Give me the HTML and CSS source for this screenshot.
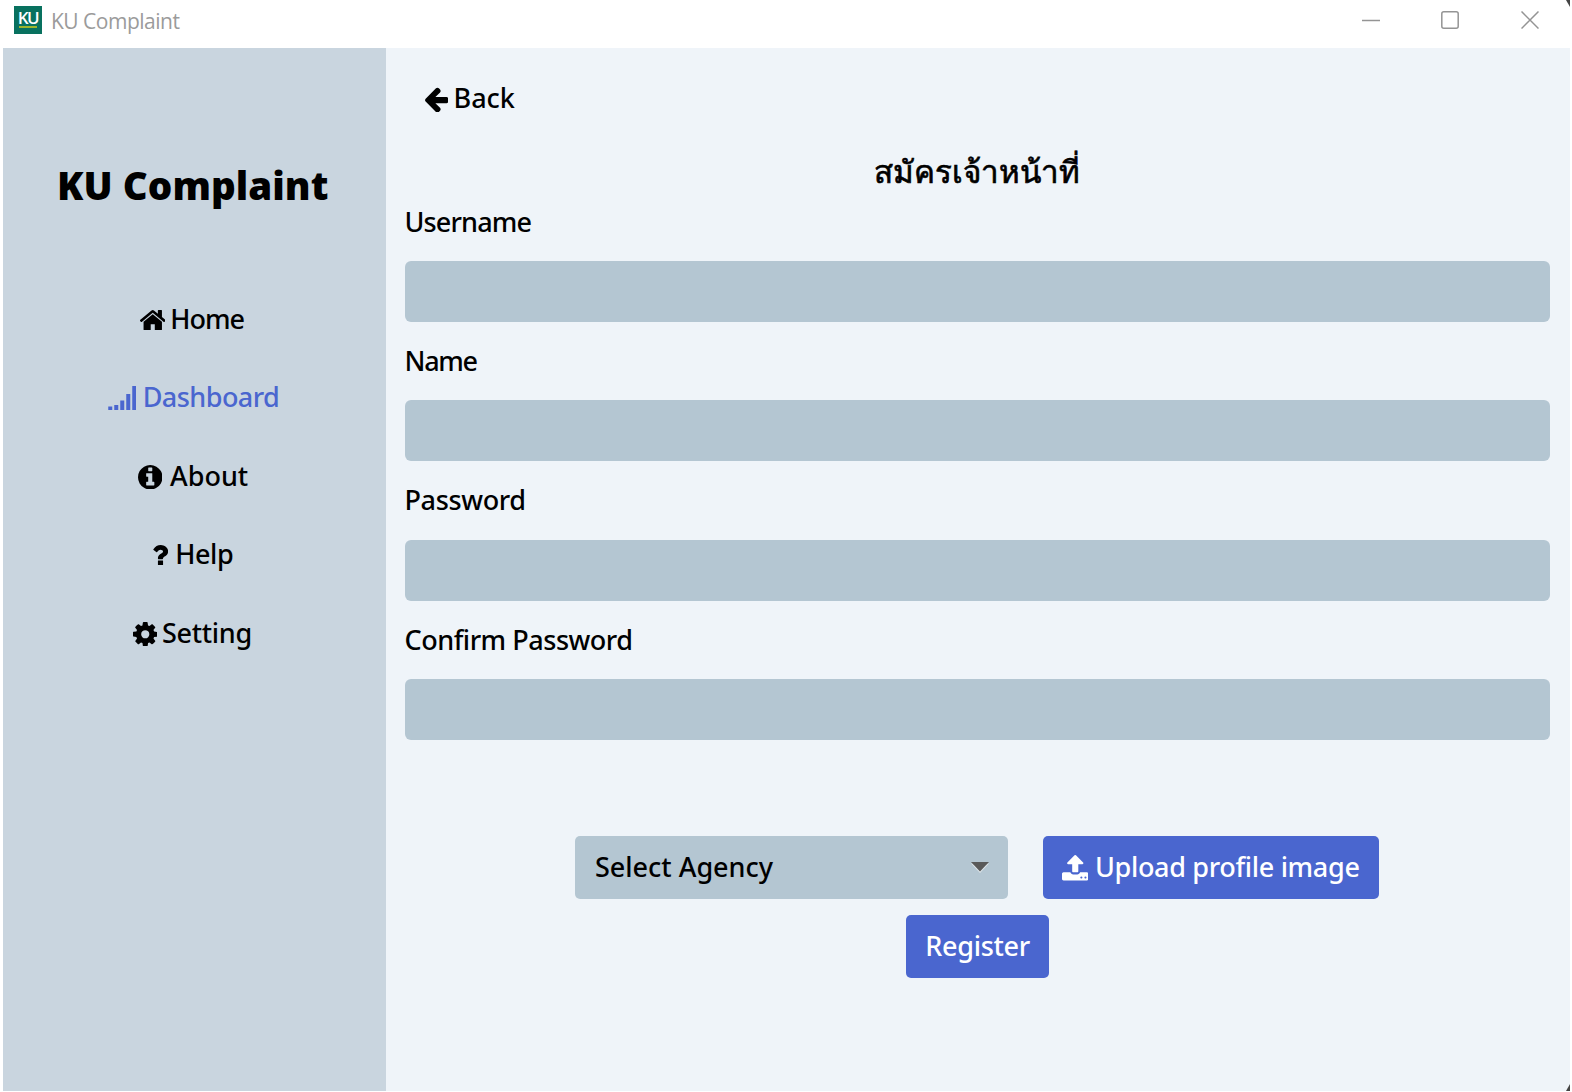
FILE: index.html
```html
<!DOCTYPE html>
<html lang="th">
<head>
<meta charset="utf-8">
<title>KU Complaint</title>
<link rel="stylesheet" href="styles.css">
</head>
<body>
<div class="window">
  <header class="titlebar">
    <div class="brand">
      <span class="logo"><span class="logo-text">KU</span></span>
      <span class="brand-name">KU Complaint</span>
    </div>
    <div class="controls">
      <svg class="control" viewBox="0 0 18 18"><path d="M0 9.5H18"/></svg>
      <svg class="control" viewBox="0 0 18 18"><rect x=".8" y=".8" width="16.4" height="16.4" rx="2"/></svg>
      <svg class="control" viewBox="0 0 18 18"><path d="M.5 .5L17.5 17.5M17.5 .5L.5 17.5"/></svg>
    </div>
  </header>
  <div class="body">
    <aside class="sidebar">
      <h1 class="app-name">KU Complaint</h1>
      <nav class="nav">
        <a class="nav-item home"><svg class="icon" viewBox="97 253 1598 1283"><path d="M1472 992v480q0 26-19 45t-45 19h-384v-384h-256v384h-384q-26 0-45-19t-19-45v-480q0-1 .5-3t.5-3l575-474 575 474q1 2 1 6zm223-69l-62 74q-8 9-21 11h-3q-13 0-21-7l-692-577-692 577q-12 8-24 7-13-2-21-11l-62-74q-8-10-7-23.5t11-21.5l719-599q32-26 76-26t76 26l244 204v-195q0-14 9-23t23-9h192q14 0 23 9t9 23v408l219 182q10 8 11 21.5t-7 23.5z"/></svg><span>Home</span></a>
        <a class="nav-item dashboard active"><svg class="icon" viewBox="0 0 28 24"><path d="M0 20.5h4V24H0zM6 19h4v5H6zM12 14.5h4V24h-4zM18 8h4v16h-4zM24 0h4v24h-4z"/></svg><span>Dashboard</span></a>
        <a class="nav-item about"><svg class="icon" viewBox="128 128 1536 1536"><path d="M1152 1376v-160q0-14-9-23t-23-9h-96v-512q0-14-9-23t-23-9h-320q-14 0-23 9t-9 23v160q0 14 9 23t23 9h96v320h-96q-14 0-23 9t-9 23v160q0 14 9 23t23 9h448q14 0 23-9t9-23zm-128-896v-160q0-14-9-23t-23-9h-192q-14 0-23 9t-9 23v160q0 14 9 23t23 9h192q14 0 23-9t9-23zm640 416q0 209-103 385.5t-279.5 279.5-385.5 103-385.5-103-279.5-279.5-103-385.5 103-385.5 279.5-279.5 385.5-103 385.5 103 279.5 279.5 103 385.5z"/></svg><span>About</span></a>
        <a class="nav-item help"><svg class="icon" viewBox="464 256 940 1280"><path d="M1088 1256v240q0 16-12 28t-28 12h-240q-16 0-28-12t-12-28v-240q0-16 12-28t28-12h240q16 0 28 12t12 28zm316-600q0 54-15.5 101t-35 76.5-55 59.5-57.5 43.5-61 35.5q-41 23-68.5 65t-27.5 67q0 17-12 32.5t-28 15.5h-240q-15 0-25.5-18.5t-10.5-37.5v-45q0-83 65-156.5t143-108.5q59-27 84-56t25-76q0-42-46.5-74t-107.5-32q-65 0-108 29-35 25-107 115-13 16-31 16-12 0-25-8l-164-125q-13-10-15.5-25t5.5-28q160-266 464-266 80 0 161 31t146 83 106 127.5 41 158.5z"/></svg><span>Help</span></a>
        <a class="nav-item setting"><svg class="icon" viewBox="128 128 1536 1536"><path d="M1152 896q0-106-75-181t-181-75-181 75-75 181 75 181 181 75 181-75 75-181zm512-109v222q0 12-8 23t-20 13l-185 28q-19 54-39 91 35 50 107 138 10 12 10 25t-9 23q-27 37-99 108t-94 71q-12 0-26-9l-138-108q-44 23-91 38-16 136-29 186-7 28-36 28h-222q-14 0-24.5-8.5t-11.5-21.5l-28-184q-49-16-90-37l-141 107q-10 9-25 9-14 0-25-11-126-114-165-168-7-10-7-23 0-12 8-23 15-21 51-66.5t54-70.5q-27-50-41-99l-183-27q-13-2-21-12.5t-8-23.5v-222q0-12 8-23t19-13l186-28q14-46 39-92-40-57-107-138-10-12-10-24 0-10 9-23 26-36 98.5-107.5t94.5-71.5q13 0 26 10l138 107q44-23 91-38 16-136 29-186 7-28 36-28h222q14 0 24.5 8.5t11.5 21.5l28 184q49 16 90 37l142-107q9-9 24-9 13 0 25 10 129 119 165 170 7 8 7 22 0 12-8 23-15 21-51 66.5t-54 70.5q26 50 41 98l183 28q13 2 21 12.5t8 23.5z"/></svg><span>Setting</span></a>
      </nav>
    </aside>
    <main class="content">
      <a class="back"><svg class="icon" viewBox="192 133 1472 1606"><path d="M1664 896v128q0 53-32.5 90.5t-84.5 37.5h-704l293 294q38 36 38 90t-38 90l-75 76q-37 37-90 37-52 0-91-37l-651-652q-37-37-37-90 0-52 37-91l651-650q38-38 91-38 52 0 90 38l75 74q38 38 38 91t-38 91l-293 293h704q52 0 84.5 37.5t32.5 90.5z"/></svg><span>Back</span></a>
      <h2 class="form-title">สมัครเจ้าหน้าที่</h2>
      <form class="form">
        <label class="field username"><span>Username</span><input class="input" type="text"></label>
        <label class="field name"><span>Name</span><input class="input" type="text"></label>
        <label class="field password"><span>Password</span><input class="input" type="password"></label>
        <label class="field confirm"><span>Confirm Password</span><input class="input" type="password"></label>
        <div class="actions">
          <div class="select"><span>Select Agency</span><svg class="caret" viewBox="0 0 18 11"><path class="caret-edge" d="M0 1.4H18L9 11z"/><path d="M0 0H18L9 9.6z"/></svg></div>
          <button class="button upload" type="button"><svg class="icon" viewBox="64 64 1664 1600"><path d="M1344 1472q0-26-19-45t-45-19-45 19-19 45 19 45 45 19 45-19 19-45zm256 0q0-26-19-45t-45-19-45 19-19 45 19 45 45 19 45-19 19-45zm128-224v320q0 40-28 68t-68 28h-1472q-40 0-68-28t-28-68v-320q0-40 28-68t68-28h427q21 56 70.5 92t110.5 36h256q61 0 110.5-36t70.5-92h427q40 0 68 28t28 68zm-325-648q-17 40-59 40h-256v448q0 26-19 45t-45 19h-256q-26 0-45-19t-19-45v-448h-256q-42 0-59-40-17-39 14-69l448-448q18-19 45-19t45 19l448 448q31 30 14 69z"/></svg><span>Upload profile image</span></button>
        </div>
        <button class="button register" type="button"><span>Register</span></button>
      </form>
    </main>
  </div>
</div>
</body>
</html>
```
FILE: styles.css
```css
* { box-sizing: border-box; }
body { margin: 0; background: #fff; color: #000; font: 500 27px/40px "Noto Sans", "Open Sans", sans-serif; }
.window { position: relative; height: 1092px; display: flex; flex-direction: column; overflow: hidden; padding: 0 2px 1px 3px; }
/* dark desktop showing behind the rounded window corners */
.window::before, .window::after { content: ""; position: absolute; right: 2px; width: 4px; height: 7px; background: #444; }
.window::before { top: 0; clip-path: polygon(0 0, 100% 0, 100% 100%); }
.window::after { bottom: 1px; clip-path: polygon(100% 0, 100% 100%, 0 100%); }

.titlebar { height: 47.5px; flex: none; display: flex; justify-content: space-between; padding: 6px 31.5px 0 11px; }
.brand { display: flex; gap: 9px; }
.logo { width: 28px; height: 28px; background: #08715f; display: flex; flex-direction: column; align-items: center; padding-top: 3px; }
.logo-text { font: 600 17px/17px "Open Sans", sans-serif; color: #fff; letter-spacing: -1.5px; }
.logo::after { content: ""; width: 18px; height: 2px; background: #9cb52c; }
.brand-name { font: 400 21px/30px "Open Sans", sans-serif; color: #9b9b9b; letter-spacing: -.5px; }
.controls { display: flex; gap: 61.4px; padding-top: 5px; }
.control { width: 18px; height: 18px; fill: none; stroke: #949494; stroke-width: 1.5; }

.body { flex: 1; display: flex; min-height: 0; }
.sidebar { width: 382.5px; flex: none; background: #c9d5df; }
.app-name { margin: 109px 0 0; padding-right: 3px; font: 900 38.5px/56px "Noto Sans", sans-serif; letter-spacing: .05px; text-align: center; white-space: nowrap; }
.nav { display: flex; flex-direction: column; margin-top: 86.5px; }
.nav-item { height: 78.4px; display: flex; align-items: flex-start; }
.icon { fill: currentColor; flex: none; width: 24.5px; height: 24.5px; margin-top: 9px; }
.home { padding-left: 136.5px; gap: 5.3px; letter-spacing: -1px; }
.home .icon { width: 25.5px; height: 20.5px; margin-top: 10.8px; }
.dashboard { padding-left: 104.5px; gap: 6.7px; letter-spacing: -.55px; }
.dashboard .icon { width: 28.5px; height: 24px; }
.about { padding-left: 134.5px; gap: 8px; }
.help { padding-left: 150px; gap: 7px; letter-spacing: -.4px; }
.help .icon { width: 15.2px; height: 20.5px; margin-top: 10.8px; }
.setting { padding-left: 129.5px; gap: 5px; letter-spacing: -.3px; }
.active { color: #4a66cf; }

.content { flex: 1; min-width: 0; background: #eff4f9; padding: 0 20px 0 19px; }
.back { display: flex; gap: 5.5px; margin: 30px 0 0 20px; }
.back .icon { width: 23.5px; height: 25.5px; margin-top: 9px; }
.form-title { margin: 31px 0 0; height: 34px; font: 500 31.3px/44px "Noto Sans", sans-serif; text-align: center; -webkit-text-stroke: .7px #000; }
.form { display: flex; flex-direction: column; }
.field { display: flex; flex-direction: column; align-items: flex-start; height: 139.4px; padding-top: 19px; gap: 19.4px; }
.username { letter-spacing: -.85px; }
.name { letter-spacing: -1.3px; }
.password { letter-spacing: -.35px; }
.confirm { letter-spacing: -.47px; }
.input { width: 100%; height: 61px; border: 0; border-radius: 6px; background: #b4c6d2; }
.actions { display: flex; justify-content: center; gap: 35px; margin-top: 96px; }
.select { width: 432.5px; height: 63px; border-radius: 5px; background: #b4c6d2; display: flex; justify-content: space-between; padding: 11px 19px 0 19.7px; }
.caret { width: 18px; height: 11px; margin-top: 15px; fill: #5a5a5a; }
.caret-edge { fill: #dfe6ea; }
.button { height: 63px; border: 0; border-radius: 5px; background: #4a66cf; color: #fff; font: inherit; padding: 11px 0 0 19px; display: flex; }
.upload { width: 336.5px; gap: 6.7px; letter-spacing: -.32px; }
.upload .icon { width: 26.5px; height: 25.5px; margin-top: 8px; }
.register { width: 143px; align-self: center; margin: 15.5px 0 0 1px; padding-left: 19px; letter-spacing: -.3px; }
```
